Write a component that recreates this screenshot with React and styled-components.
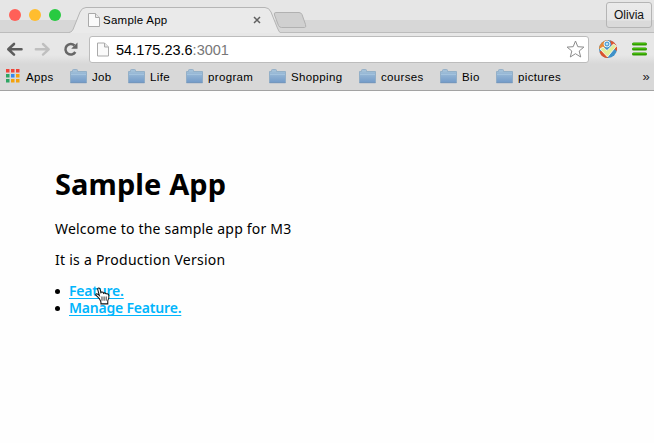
import React from 'react';
import styled, { createGlobalStyle } from 'styled-components';

const GlobalStyle = createGlobalStyle`
  * { box-sizing: border-box; }
  body { margin: 0; background: #fefefe; overflow: hidden; }
`;

const Window = styled.div`
  width: 654px;
  height: 443px;
  display: flex;
  flex-direction: column;
  background: #fefefe;
  font-family: 'Liberation Sans', Arial, sans-serif;
  color: #000;
`;

const TabStrip = styled.header`
  height: 33px;
  display: flex;
  align-items: flex-start;
  background: linear-gradient(#e6e6e6 0 20px, #d7d7d7 20px 32px, #bcbcbc 32px);
`;

const Lights = styled.div`
  display: flex;
  gap: 8px;
  padding: 9px 0 0 9px;
  width: 69px;
`;

const Light = styled.i`
  width: 12px;
  height: 12px;
  border-radius: 50%;
  background: ${(p) => p.$color};
`;

const Tab = styled.div`
  position: relative;
  width: 211px;
  height: 33px;
`;

const TabShape = styled.svg`
  position: absolute;
  inset: 0;
`;

const TabContent = styled.div`
  position: relative;
  display: flex;
  align-items: center;
  height: 24px;
  margin-top: 8px;
  padding: 0 19px 0 19px;
`;

const TabTitle = styled.span`
  margin-left: 3px;
  flex: 1;
  font-size: 11.5px;
  letter-spacing: 0.25px;
  white-space: nowrap;
`;

const NewTab = styled.svg`
  margin: 11px 0 0 -7px;
`;

const Profile = styled.button`
  margin: 2px 2px 0 auto;
  width: 46px;
  height: 26px;
  padding: 0;
  border: 1px solid #b5b5b5;
  border-radius: 3px;
  background: linear-gradient(#ebebeb, #e6e6e6 17px, #dadada 18px);
  font: 12px 'Liberation Sans', Arial, sans-serif;
  color: #111;
`;

const Toolbar = styled.div`
  height: 31px;
  display: flex;
  align-items: center;
  padding: 1px 6px 0;
  background: linear-gradient(#e7e7e7 22px, #d8d8d8);
`;

const NavIcons = styled.div`
  display: flex;
  gap: 11px;
  width: 83px;
`;

const AddressBar = styled.div`
  width: 500px;
  height: 27px;
  display: flex;
  align-items: center;
  padding: 0 3px 0 7px;
  background: #fff;
  border: 1px solid #bcbcbc;
  border-radius: 3px;
`;

const Address = styled.span`
  flex: 1;
  margin: 1px 0 0 7px;
  font-size: 14.5px;
`;

const Port = styled.span`
  color: #777;
`;

const Extensions = styled.div`
  display: flex;
  align-items: center;
  gap: 14px;
  margin-left: 9px;
`;

const BookmarksBar = styled.nav`
  height: 27px;
  display: flex;
  align-items: center;
  padding: 0 4px 0 6px;
  background: #d8d8d8;
  border-bottom: 1px solid #a3a3a3;
  font-size: 11.5px;
  letter-spacing: 0.35px;
`;

const Bookmark = styled.div`
  display: flex;
  align-items: center;
  gap: ${(p) => p.$gap || 5}px;
  width: ${(p) => p.$width}px;
  white-space: nowrap;
  flex: none;

  svg {
    margin-bottom: 2px;
  }
`;

const Overflow = styled.span`
  margin: -2px 0 0 auto;
  font-size: 13px;
  color: #222;
`;

const Page = styled.main`
  position: relative;
  flex: 1;
  padding: 73px 55px 0;
  font-family: 'Noto Sans', sans-serif;
  font-size: 14px;
  line-height: 17px;
`;

const Title = styled.h1`
  margin: 0;
  font-size: 29px;
  line-height: 40px;
  font-weight: 700;
  letter-spacing: 0.1px;
`;

const Paragraph = styled.p`
  margin: ${(p) => p.$top}px 0 0;
  letter-spacing: ${(p) => p.$spacing || 0};
`;

const Links = styled.ul`
  margin: 14px 0 0;
  padding: 0 0 0 14px;
  list-style: none;
`;

const LinkItem = styled.li`
  height: 17px;
  display: flex;
  align-items: center;
  &::before {
    content: '';
    width: 5px;
    height: 5px;
    margin: 1px 9px 0 -14px;
    border-radius: 50%;
    background: #000;
  }
`;

const Link = styled.a`
  color: #00b5fc;
  font-weight: 600;
  letter-spacing: -0.2px;
  text-decoration: underline 1px;
  text-decoration-skip-ink: none;
  text-underline-offset: 2px;
`;

const Pointer = styled.svg`
  position: absolute;
  left: 94px;
  top: 196px;
`;

const PageIcon = ({ width = 12, height = 14 }) => (
  <svg width={width} height={height} viewBox="0 0 12 14">
    <path d="M.5.5h7l4 4v9H.5z" fill="#fafafa" stroke="#aaa" />
    <path d="M7.5.5v4h4" fill="#e7e7e7" stroke="#aaa" />
  </svg>
);

const FolderIcon = () => (
  <svg width="17" height="15" viewBox="0 0 17 15">
    <defs>
      <linearGradient id="folder" x2="0" y2="1">
        <stop stopColor="#a8c5db" />
        <stop offset="1" stopColor="#739bc9" />
      </linearGradient>
    </defs>
    <path d="M.5 13.5v-11h2v-1q0-1 1-1h3q1 0 1 1v1h9v11z" fill="url(#folder)" stroke="#8aa9c4" strokeWidth=".8" />
    <path d="M1 5.5h15" stroke="#aecce4" strokeWidth=".6" />
    <path d="M.5 13.7h16" stroke="#6e92ba" />
  </svg>
);

const appColors = ['#ef4438', '#ef4438', '#ef4438', '#2da562', '#3587ee', '#f3a20c', '#2da562', '#f3a20c', '#f3a20c'];
const AppsIcon = () => (
  <svg width="14" height="14">
    {appColors.map((color, i) => (
      <rect key={i} x={(i % 3) * 5} y={Math.floor(i / 3) * 5} width="3.5" height="3.5" fill={color} />
    ))}
  </svg>
);

const bookmarks = [
  ['Job', 58], ['Life', 58], ['program', 83], ['Shopping', 90], ['courses', 81], ['Bio', 56], ['pictures', 70],
];

export default function App() {
  return (
    <Window>
      <GlobalStyle />
      <TabStrip>
        <Lights>
          <Light $color="#ff6058" />
          <Light $color="#ffbd2e" />
          <Light $color="#28ca41" />
        </Lights>
        <Tab>
          <TabShape width="211" height="33">
            <path d="M0 32.5C3 32 4 30 5 27L11 12Q13 7.5 17 7.5H196Q200 7.5 202 12L208 27Q210 32 211 32.5V33H0z" fill="#eaeaea" />
            <path d="M0 32.5C3 32 4 30 5 27L11 12Q13 7.5 17 7.5H196Q200 7.5 202 12L208 27Q210 32 211 32.5" fill="none" stroke="#b5b5b5" />
          </TabShape>
          <TabContent>
            <PageIcon />
            <TabTitle>Sample App</TabTitle>
            <svg width="8" height="8"><path d="m1 1 6 6M7 1 1 7" stroke="#606060" strokeWidth="1.5" /></svg>
          </TabContent>
        </Tab>
        <NewTab width="34" height="18">
          <path d="M3 1.5h23q2 0 3 2l3.5 10q1 3-1 3H8.5q-2 0-3-2L1.5 4q-1-2.5 1.5-2.5" fill="#d0d0d0" stroke="#b1b1b1" />
        </NewTab>
        <Profile>Olivia</Profile>
      </TabStrip>
      <Toolbar>
        <NavIcons>
          <svg width="17" height="16"><path d="M15.500 8.300H3M8 3 2.300 8.300 8 13.600" fill="none" stroke="#5c5c5c" strokeWidth="2.600" strokeLinecap="round" strokeLinejoin="round" /></svg>
          <svg width="17" height="16"><path d="M1.800 8.300h12.500M9 3l5.700 5.300L9 13.600" fill="none" stroke="#bfbfbf" strokeWidth="2.400" strokeLinecap="round" strokeLinejoin="round" /></svg>
          <svg width="17" height="16"><path d="M12.500 4.500A5.300 5.300 0 1 0 13.300 11" fill="none" stroke="#666" strokeWidth="2.500" /><path d="M15.500 1.500v6.300H9.200z" fill="#666" /></svg>
        </NavIcons>
        <AddressBar>
          <PageIcon width={12} height={15} />
          <Address>54.175.23.6<Port>:3001</Port></Address>
          <svg width="19" height="18" viewBox="0 0 19 18"><path d="m9.500 1 2.300 5.700 6.100.4-4.700 3.900 1.500 6-5.200-3.300L4.300 17l1.500-6-4.700-3.900 6.100-.4z" fill="#fff" stroke="#8c8c8c" strokeLinejoin="round" /></svg>
        </AddressBar>
        <Extensions>
          <svg width="20" height="20" viewBox="0 0 20 20">
            <circle cx="10" cy="10" r="9" fill="#3f91c8" />
            <path d="M10 1A9 9 0 0 0 1 10l5-1 5-4z" fill="#e58a38" />
            <path d="M12 1.200A9 9 0 0 1 18.800 12L14 8z" fill="#e0562e" />
            <path d="M1.500 13a9 9 0 0 0 8.500 6l-1-3-5-5z" fill="#d9532c" />
            <circle cx="9" cy="5" r="3" fill="#5aa6d8" stroke="#e3f2fa" />
            <circle cx="9" cy="5" r="1" fill="#e3f2fa" />
            <path d="m2 10 3-2 4 3.500L15.500 5l3 2L9.500 18z" fill="#e2ee9a" stroke="#fff" strokeWidth=".8" />
          </svg>
          <svg width="15" height="14">
            <path d="M1.500 2h12M1.500 7h12M1.500 12h12" stroke="#319b00" strokeWidth="3" strokeLinecap="round" />
            <path d="M1.500 1.500h12M1.500 6.500h12M1.500 11.500h12" stroke="#43bd08" strokeWidth="1.200" strokeLinecap="round" />
          </svg>
        </Extensions>
      </Toolbar>
      <BookmarksBar>
        <Bookmark $width={64} $gap={6}><AppsIcon />Apps</Bookmark>
        {bookmarks.map(([name, width]) => (
          <Bookmark key={name} $width={width}><FolderIcon />{name}</Bookmark>
        ))}
        <Overflow>»</Overflow>
      </BookmarksBar>
      <Page>
        <Title>Sample App</Title>
        <Paragraph $top={16} $spacing="0.2px">Welcome to the sample app for M3</Paragraph>
        <Paragraph $top={14} $spacing="0.25px">It is a Production Version</Paragraph>
        <Links>
          <LinkItem><Link>Feature.</Link></LinkItem>
          <LinkItem><Link>Manage Feature.</Link></LinkItem>
        </Links>
        <Pointer width="17" height="19" viewBox="0 0 16 18">
          <path d="M5 11 2.500 8.500Q1 7 2 6.500T5 8L3.500 2.500Q3 1 4.500 1T6.500 6q0-2 2-1l.5 1q1-1 2.500.5 2-.5 2.500 1.500.5 3-1 5v3H6.500v-2z" fill="#fff" stroke="#111" />
          <path d="M7.500 9v4M9.500 9v4M11.500 9v4" stroke="#111" strokeWidth=".8" />
        </Pointer>
      </Page>
    </Window>
  );
}
